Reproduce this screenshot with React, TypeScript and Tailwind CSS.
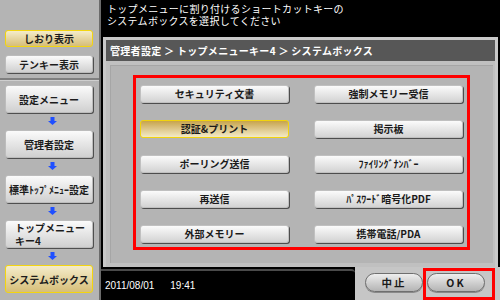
const jp = "font-['Noto_Sans_CJK_JP','Noto_Sans',sans-serif]";

const Arrow = () => (
  <div className="h-[8px] my-[4px] mb-[5px] flex justify-center pr-[2px]">
    <svg width="9" height="8" viewBox="0 0 9 8">
      <rect x="2.5" y="0" width="4" height="4" fill="#1f4fff" />
      <polygon points="0,4 9,4 4.5,8" fill="#1f4fff" />
    </svg>
  </div>
);

const SideBtn = ({ label, active, h, className = "" }: { label: string; active?: boolean; h: string; className?: string }) => (
  <div
    className={`${h} w-[88px] rounded-[3px] flex items-center justify-center text-[10px] font-bold text-[#1c1c1c] ${
      active
        ? "bg-linear-to-b from-[#f4ecca] to-[#d6be78] border border-[#f3d510]"
        : "bg-linear-to-b from-[#fbfbfb] to-[#d0d0d0] border border-[#bcbcbc] shadow-[1px_1px_0_#4f4f4f]"
    } ${className}`}
  >
    {label}
  </div>
);

const Btn = ({ label, active }: { label: string; active?: boolean }) => (
  <div
    className={`h-[18px] rounded-[3px] flex items-center justify-center text-[10px] font-bold leading-none text-[#1a1a1a] ${
      active
        ? "bg-linear-to-b from-[#c7a44a] to-[#f3eac6] border border-[#f2d40c]"
        : "bg-linear-to-b from-[#fbfbfb] to-[#d3d3d3] border border-[#c0c0c0] shadow-[1px_1px_0_#4d4d4d]"
    }`}
  >
    {label}
  </div>
);

const Pill = ({ label }: { label: string }) => (
  <div className="h-[19px] w-[58px] rounded-full bg-linear-to-b from-[#eeeeee] to-[#b4b4b4] border border-[#6f6f6f] shadow-[0_1px_0_#8a8a8a] flex items-center justify-center text-[10.5px] font-bold tracking-[2px] text-[#1a1a1a]">
    {label}
  </div>
);

const items = [
  "セキュリティ文書",
  "強制メモリー受信",
  "認証&プリント",
  "掲示板",
  "ポーリング送信",
  "ﾌｧｲﾘﾝｸﾞﾅﾝﾊﾞｰ",
  "再送信",
  "ﾊﾟｽﾜｰﾄﾞ暗号化PDF",
  "外部メモリー",
  "携帯電話/PDA",
];

export default function App() {
  return (
    <div className={`w-[500px] h-[300px] flex bg-black overflow-hidden ${jp}`}>
      <aside className="w-[101px] h-full flex flex-col bg-[#b4b4b4] shadow-[inset_-2px_0_0_#6b6b6b]">
        <div className="h-[78px] pt-[30px] pl-[5px] flex flex-col gap-[8px]">
          <SideBtn label="しおり表示" active h="h-[17px]" />
          <SideBtn label="テンキー表示" h="h-[18px]" />
        </div>
        <div className="h-[3px] bg-[#7f7f7f] border-b border-[#cfcfcf] mr-[2px]" />
        <div className="pt-[4px] pl-[5px] flex flex-col">
          <SideBtn label="設定メニュー" h="h-[28px]" />
          <Arrow />
          <SideBtn label="管理者設定" h="h-[28px]" />
          <Arrow />
          <SideBtn label="標準ﾄｯﾌﾟﾒﾆｭｰ設定" h="h-[28px]" />
          <Arrow />
          <div className="h-[28px] w-[88px] rounded-[3px] bg-linear-to-b from-[#fbfbfb] to-[#d0d0d0] border border-[#bcbcbc] shadow-[1px_1px_0_#4f4f4f] pl-[9px] pt-[1px] text-[10px] leading-[12.5px] font-bold text-[#1c1c1c]">
            <div>トップメニュー</div>
            <div>キー4</div>
          </div>
          <Arrow />
          <SideBtn label="システムボックス" active h="h-[28px]" />
        </div>
      </aside>

      <main className="flex-1 h-full flex flex-col">
        <div className="h-[37px] pl-[6px] pt-[3px] text-white text-[10px] leading-[11.5px] tracking-[0.3px]">
          <div>トップメニューに割り付けるショートカットキーの</div>
          <div>システムボックスを選択してください</div>
        </div>

        <section className="h-[230px] mx-[2px] bg-[#c9c9c9] p-[3px] pb-0 flex flex-col">
          <div className="h-[21px] bg-[#575757] pl-[4px] flex items-center text-white text-[10px] font-bold tracking-[0.3px]">
            管理者設定 ＞ トップメニューキー4 ＞ システムボックス
          </div>
          <div className="flex-1 pt-[4px] pl-[4px] pr-[2px] pb-[4px] bg-[#c0c0c0]">
            <div className="h-full bg-[#b4b4b4] pt-[10px] pl-[23px] shadow-[inset_1px_1px_0_#a6a6a6]">
              <div className="w-[337px] h-[175px] border-[3px] border-[#ff0000] px-[4px] pt-[7px] grid grid-cols-2 gap-x-[25px] gap-y-[17px] content-start">
                {items.map((t, i) => (
                  <Btn key={t} label={t} active={i === 2} />
                ))}
              </div>
            </div>
          </div>
        </section>

        <div className="flex-1 flex">
          <div className="w-[254px] mt-[2px] bg-black border-t-[2px] border-[#4a4a4a] rounded-tr-[4px] flex items-center pl-[4px] gap-[16px] text-white text-[10px] font-['Liberation_Sans',sans-serif]">
            <span>2011/08/01</span>
            <span>19:41</span>
          </div>
          <div className="flex-1 bg-[#c6c6c6] flex items-start pl-[10px]">
            <div className="mt-[6px]">
              <Pill label="中止" />
            </div>
            <div className="mt-[1px] h-[32px] w-[72px] border-[3px] border-[#ff0000] pt-[2px] pl-[1px]">
              <Pill label="OK" />
            </div>
          </div>
        </div>
      </main>
    </div>
  );
}
